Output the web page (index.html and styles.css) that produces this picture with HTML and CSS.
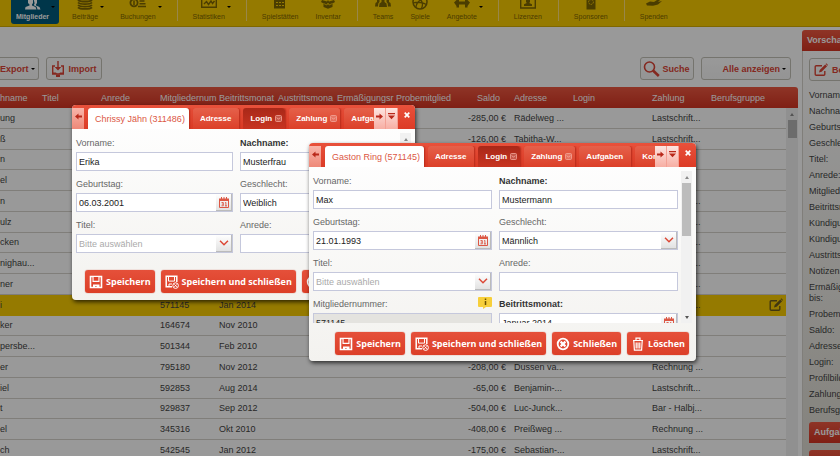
FILE: index.html
```html
<!DOCTYPE html>
<html lang="de">
<head>
<meta charset="utf-8">
<title>Mitglieder</title>
<link rel="stylesheet" href="styles.css">
</head>
<body>
<svg class="sprite" aria-hidden="true">
  <symbol id="i-save" viewBox="0 0 14 14"><path fill="none" stroke="currentColor" stroke-width="1.6" d="M1.5 1.5h11v11h-11z"/><path fill="currentColor" d="M3.5 1h7v6h-7zM4 9.5h6.5V13H7.6v-2H6.2v2H4z"/><path fill="#e0432e" d="M4.6 2h4.8v3.8H4.6z"/></symbol>
  <symbol id="i-saveclose" viewBox="0 0 14 14"><path fill="none" stroke="currentColor" stroke-width="1.5" d="M7 11.8H1.2V1.2h10.6V7"/><path fill="none" stroke="currentColor" d="M3.5 1.5v4.6h6V1.5M4 12V9h3"/><circle cx="10.6" cy="10.6" r="2.8" fill="#e0432e" stroke="currentColor"/><path stroke="currentColor" d="M9.4 9.4l2.4 2.4M11.8 9.4l-2.4 2.4"/></symbol>
  <symbol id="i-close" viewBox="0 0 14 14"><circle cx="7" cy="7" r="5.3" fill="none" stroke="currentColor" stroke-width="1.8"/><path stroke="currentColor" stroke-width="2.2" d="M4.6 4.6l4.8 4.8M9.4 4.6L4.6 9.4"/></symbol>
  <symbol id="i-trash" viewBox="0 0 14 14"><path fill="none" stroke="currentColor" stroke-width="1.2" d="M2 3.5h10M5 3V1.2h4V3M2.8 4l.6 9.2h7.2l.6-9.2M5.2 5.5v6M7 5.5v6M8.8 5.5v6"/></symbol>
  <symbol id="i-edit" viewBox="0 0 14 14"><path fill="none" stroke="currentColor" stroke-width="1.4" d="M8 2.7H2.2A1 1 0 0 0 1.2 3.7v7.600a1 1 0 0 0 1 1h7.600a1 1 0 0 0 1-1V8"/><path fill="currentColor" d="M5 9.500l.7-2.600L11.200 1.400l1.900 1.900-5.500 5.500zM11.700.9l.6-.6 1.700 1.700-.5.7z"/></symbol>
  <symbol id="i-cal" viewBox="0 0 10 11"><path fill="none" stroke="#dc5744" d="M.5 2.500h9v8h-9z"/><path fill="#dc5744" d="M0 1.500h10v2.500H0zM2 0h1v2H2zM4.500 0h1v2h-1zM7 0h1v2H7z"/><path fill="none" stroke="#dc5744" stroke-width=".9" d="M2.500 5.500h1.800v3.300H2.500M2.800 7.100h1.500M6 6l.9-.6v3.700M6 8.900h2"/></symbol>
  <symbol id="i-chev" viewBox="0 0 10 6"><path fill="none" stroke="#dc4a38" stroke-width="1.500" d="M1 .8l4 4 4-4"/></symbol>
  <symbol id="i-left" viewBox="0 0 7 7"><path fill="currentColor" d="M0 3.500L3.500.5v2H7v2H3.500v2z"/></symbol>
  <symbol id="i-right" viewBox="0 0 7 7"><path fill="currentColor" d="M7 3.500L3.500.5v2H0v2h3.500v2z"/></symbol>
  <symbol id="i-list" viewBox="0 0 7 7"><path fill="currentColor" d="M0 0h7v1.300H0zM0 2.500h7L3.500 6.300z"/></symbol>
  <symbol id="i-x" viewBox="0 0 6 6"><path stroke="currentColor" stroke-width="1.700" d="M.7.7l4.600 4.600M5.300.7L.7 5.300"/></symbol>
  <symbol id="i-box" viewBox="0 0 7 7"><rect x=".5" y=".5" width="6" height="6" rx="1" fill="#ffffff33" stroke="currentColor" stroke-width=".8"/><path fill="none" stroke="currentColor" stroke-width=".9" d="M1.800 2.500L3.500 4.300l1.700-1.800"/></symbol>
</svg>

<div class="app">
  <nav class="nav">
    <div class="group">
      <a href="#" class="item active drop"><svg class="ico" viewBox="0 0 18 10"><path fill="#fff" d="M4 0h5v3l-1 1.500v1l3.500 1.500 1 2.500H1L1.500 7 5.500 5.500v-1L4 3zM9.800 0H13v3l-1 1.500v1L15.500 7l1 2.500h-3l-.8-2.800L9.800 5.300l.8-2z"/></svg>Mitglieder</a>
      <a href="#" class="item drop"><svg class="ico" viewBox="0 0 18 10"><path fill="none" stroke="currentColor" stroke-width="1.800" d="M2 0c2 2 12 2 14 0M2 2.500c2 2.200 12 2.200 14 0M2 5c2 2.200 12 2.200 14 0M2 7.300c2 2.200 12 2.200 14 0"/></svg>Beiträge</a>
      <a href="#" class="item drop"><svg class="ico" viewBox="0 0 18 10"><circle cx="5" cy="2.800" r="3.600" fill="none" stroke="currentColor" stroke-width="1.800"/><path stroke="currentColor" stroke-width="1.500" d="M5 .5v4.500M10.500 1h5M10.500 3.700h6M9 6.500h8"/></svg>Buchungen</a>
    </div>
    <div class="group">
      <a href="#" class="item drop"><svg class="ico" viewBox="0 0 18 10"><path fill="none" stroke="currentColor" stroke-width="1.400" d="M1.700 0v7.300h14.600V0M4 4l2.500-2.500 2 3L11 1l1.500 2.500L14.500 1"/></svg>Statistiken</a>
    </div>
    <div class="group">
      <a href="#" class="item"><svg class="ico" viewBox="0 0 18 10"><path fill="currentColor" d="M3 0h11v8.500H3z"/><path stroke="#f9cb00" d="M5 2.500h2M8 2.500h2M11 2.500h2M5 5.500h2M8 5.500h2M11 5.500h2"/></svg>Spielstätten</a>
      <a href="#" class="item"><svg class="ico" viewBox="0 0 18 10"><path fill="currentColor" d="M3 0l5 1.500L9 0l1 1.500L15 0l1 2-2.500 1.500V7L9 8.700 4.500 7V3.500L2 2z"/><path stroke="#f9cb00" stroke-width=".8" fill="none" d="M4.500 3.500L8 5l1-2 1 2 3.500-1.500"/></svg>Inventar</a>
    </div>
    <div class="group">
      <a href="#" class="item"><svg class="ico" viewBox="0 0 18 10"><path fill="currentColor" d="M7.500 0h3v2l2 1.500.5 3.500H5l.5-3.500 2-1.500zM3 0h2.500v2L4.300 3.500 4 6.500H1l.5-3.500L3 2zM12.500 0H15v2l1.500 1L17 6.500h-3l-.3-3-1.200-1.500z"/></svg>Teams</a>
      <a href="#" class="item"><svg class="ico" viewBox="0 0 18 10"><circle cx="9" cy="2" r="7" fill="none" stroke="currentColor" stroke-width="1.500"/><path fill="none" stroke="currentColor" stroke-width="1.300" d="M2 3c5-1.500 9-1 13.500 1.500M5 8c0-4 2-7 6-9M10 9c2-3 2-6 0-9"/></svg>Spiele</a>
      <a href="#" class="item drop"><svg class="ico" viewBox="0 0 18 10"><path fill="currentColor" d="M1 2.500L3.500 0H6v1.500h6V0h2.500L17 2.500 14.500 6v1.500H12v-3H6v3H3.500V6z"/></svg>Angebote</a>
    </div>
    <div class="group">
      <a href="#" class="item"><svg class="ico" viewBox="0 0 18 10"><path fill="none" stroke="currentColor" stroke-width="1.400" d="M1.700 0v8h14.600V0"/><path fill="currentColor" d="M7 0h4v2l-.8 1 2.800 1.300V6H5V4.300L7.800 3 7 2z"/></svg>Lizenzen</a>
    </div>
    <div class="group">
      <a href="#" class="item"><svg class="ico" viewBox="0 0 18 10"><path fill="currentColor" d="M4.500 0h9v9.500h-9z"/><circle cx="9" cy="2" r="2.400" fill="none" stroke="#f9cb00" stroke-dasharray="1.500 .8"/></svg>Sponsoren</a>
    </div>
    <div class="group">
      <a href="#" class="item"><svg class="ico" viewBox="0 0 18 10"><path fill="currentColor" d="M1 3.500l4-2 4 .5L12 0h3l-2 2 4-1-4 3.500-5 1.300-6-.3z"/></svg>Spenden</a>
    </div>
  </nav>

  <div class="content">
    <main class="main">
      <div class="toolbar">
        <button class="btn cut">Export<i class="caret"></i></button>
        <button class="btn"><svg width="14" height="16" viewBox="0 0 14 16"><path fill="none" stroke="currentColor" stroke-width="1.400" d="M4 5H1.700v8h10.600V5H10"/><path fill="currentColor" d="M6.300 0h1.400v6h2.600L7 9.500 3.700 6h2.600zM5 13.500h4V16H5zM1 11.500h4L6 13H1zM13 11.500H9L8 13h5z"/></svg>Import</button>
        <span class="push"></span>
        <button class="btn search"><svg width="17" height="16" viewBox="0 0 17 16"><circle cx="6.500" cy="6" r="5" fill="none" stroke="currentColor" stroke-width="1.600"/><path stroke="currentColor" stroke-width="2.600" d="M10 9.500l5.800 5.500"/></svg>Suche</button>
        <button class="btn wide">Alle anzeigen<i class="caret"></i></button>
      </div>
      <div class="grid">
        <table class="members">
          <colgroup><col class="c-name"><col class="c-std"><col class="c-std"><col class="c-std"><col class="c-std"><col class="c-std"><col class="c-std"><col class="c-std"><col class="c-std"><col class="c-std"><col class="c-login"><col class="c-std"><col></colgroup>
          <thead><tr><th>hname</th><th>Titel</th><th>Anrede</th><th>Mitgliedernum</th><th>Beitrittsmonat</th><th>Austrittsmona</th><th>Ermäßigungsr</th><th>Probemitglied</th><th class="num">Saldo</th><th>Adresse</th><th>Login</th><th>Zahlung</th><th>Berufsgruppe</th></tr></thead>
          <tbody>
            <tr><td>ung</td><td></td><td></td><td></td><td></td><td></td><td></td><td></td><td class="num">-285,00 €</td><td>Rädelweg ...</td><td></td><td>Lastschrift...</td><td></td></tr>
            <tr><td>ß</td><td></td><td></td><td></td><td></td><td></td><td></td><td></td><td class="num">-126,00 €</td><td>Tabitha-W...</td><td></td><td>Lastschrift...</td><td></td></tr>
            <tr><td>n</td><td></td><td></td><td></td><td></td><td></td><td></td><td></td><td></td><td></td><td></td><td></td><td></td></tr>
            <tr><td>el</td><td></td><td></td><td></td><td></td><td></td><td></td><td></td><td></td><td></td><td></td><td></td><td></td></tr>
            <tr><td>n</td><td></td><td></td><td></td><td></td><td></td><td></td><td></td><td></td><td></td><td></td><td>Lastschrift...</td><td></td></tr>
            <tr><td>ulz</td><td></td><td></td><td></td><td></td><td></td><td></td><td></td><td></td><td></td><td></td><td>Lastschrift...</td><td></td></tr>
            <tr><td>cken</td><td></td><td></td><td></td><td></td><td></td><td></td><td></td><td></td><td></td><td></td><td>Lastschrift...</td><td></td></tr>
            <tr><td>nighau...</td><td></td><td></td><td></td><td></td><td></td><td></td><td></td><td></td><td></td><td></td><td>Lastschrift...</td><td></td></tr>
            <tr><td>ner</td><td></td><td></td><td></td><td></td><td></td><td></td><td></td><td></td><td></td><td></td><td>Lastschrift...</td><td></td></tr>
            <tr class="selected"><td>i</td><td></td><td></td><td>571145</td><td>Jan 2014</td><td></td><td></td><td></td><td></td><td></td><td></td><td>Lastschrift...</td><td class="action"><svg width="14" height="14"><use href="#i-edit"/></svg></td></tr>
            <tr><td>ker</td><td></td><td></td><td>164674</td><td>Nov 2010</td><td></td><td></td><td></td><td></td><td></td><td></td><td></td><td></td></tr>
            <tr><td>persbe...</td><td></td><td></td><td>501344</td><td>Feb 2010</td><td></td><td></td><td></td><td></td><td></td><td></td><td></td><td></td></tr>
            <tr><td>er</td><td></td><td></td><td>795180</td><td>Nov 2012</td><td></td><td></td><td></td><td class="num">-208,00 €</td><td>Dussen va...</td><td></td><td>Rechnung ...</td><td></td></tr>
            <tr><td>iel</td><td></td><td></td><td>592853</td><td>Aug 2014</td><td></td><td></td><td></td><td class="num">-65,00 €</td><td>Benjamin-...</td><td></td><td>Lastschrift...</td><td></td></tr>
            <tr><td>t</td><td></td><td></td><td>929837</td><td>Sep 2012</td><td></td><td></td><td></td><td class="num">-504,00 €</td><td>Luc-Junck...</td><td></td><td>Bar - Halbj...</td><td></td></tr>
            <tr><td>el</td><td></td><td></td><td>345316</td><td>Okt 2010</td><td></td><td></td><td></td><td class="num">-408,00 €</td><td>Preißweg ...</td><td></td><td>Rechnung ...</td><td></td></tr>
            <tr><td>ch</td><td></td><td></td><td>542545</td><td>Jan 2012</td><td></td><td></td><td></td><td class="num">-175,00 €</td><td>Sebastian-...</td><td></td><td>Lastschrift...</td><td></td></tr>
          </tbody>
        </table>
        <div class="scroll"><i class="up"></i><i class="thumb"></i></div>
      </div>
    </main>

    <aside class="side">
      <h2>Vorschau</h2>
      <div class="side-body">
        <button class="btn"><svg width="14" height="14"><use href="#i-edit"/></svg>Bearbeiten</button>
        <ul>
          <li>Vorname:</li><li>Nachname:</li><li>Geburtstag:</li><li>Geschlecht:</li><li>Titel:</li><li>Anrede:</li><li>Mitgliedernummer:</li><li>Beitrittsmonat:</li><li>Kündigung:</li><li>Kündigung:</li><li>Austrittsmonat:</li><li>Notizen:</li><li>Ermäßigung<br>bis:</li><li>Probemitglied:</li><li>Saldo:</li><li>Adresse:</li><li>Login:</li><li>Profilbild:</li><li>Zahlung:</li><li>Berufsgruppe:</li>
        </ul>
        <h3>Aufgaben</h3>
        <h3>Notizen</h3>
      </div>
    </aside>
  </div>
</div>

<div class="shade"></div>

<section class="win win-back" role="dialog" aria-label="Chrissy Jähn">
  <header class="bar">
    <button class="step" aria-label="Zurück"><svg width="7" height="7"><use href="#i-left"/></svg></button>
    <div class="tabs">
      <button class="tab on">Chrissy Jähn (311486)</button>
      <button class="tab">Adresse</button>
      <button class="tab dark more">Login<svg width="7" height="7"><use href="#i-box"/></svg></button>
      <button class="tab more">Zahlung<svg width="7" height="7"><use href="#i-box"/></svg></button>
      <button class="tab">Aufgaben</button>
    </div>
    <button class="step" aria-label="Weiter"><svg width="7" height="7"><use href="#i-right"/></svg></button>
    <button class="step" aria-label="Liste"><svg width="7" height="7"><use href="#i-list"/></svg></button>
    <button class="quit" aria-label="Schließen"><svg width="6" height="6"><use href="#i-x"/></svg></button>
  </header>
  <div class="pane">
    <form class="fields">
      <div class="field"><label for="a1">Vorname:</label><input id="a1" value="Erika"></div>
      <div class="field"><label class="req" for="a2">Nachname:</label><input id="a2" value="Musterfrau"></div>
      <div class="field"><label for="a3">Geburtstag:</label><div class="box"><input id="a3" value="06.03.2001"><span class="trig"><svg width="10" height="11"><use href="#i-cal"/></svg></span></div></div>
      <div class="field"><label for="a4">Geschlecht:</label><div class="box"><select id="a4"><option>Weiblich</option></select><span class="trig"><svg width="10" height="6"><use href="#i-chev"/></svg></span></div></div>
      <div class="field"><label for="a5">Titel:</label><div class="box"><select id="a5" class="empty"><option>Bitte auswählen</option></select><span class="trig"><svg width="10" height="6"><use href="#i-chev"/></svg></span></div></div>
      <div class="field"><label for="a6">Anrede:</label><input id="a6"></div>
    </form>
    <div class="scroll light"><i class="up"></i></div>
  </div>
  <footer class="actions start">
    <button class="act"><svg width="14" height="14"><use href="#i-save"/></svg>Speichern</button>
    <button class="act"><svg width="14" height="14"><use href="#i-saveclose"/></svg>Speichern und schließen</button>
    <button class="act"><svg width="14" height="14"><use href="#i-close"/></svg>Schließen</button>
  </footer>
</section>

<section class="win win-front" role="dialog" aria-label="Gaston Ring">
  <header class="bar">
    <button class="step" aria-label="Zurück"><svg width="7" height="7"><use href="#i-left"/></svg></button>
    <div class="tabs">
      <button class="tab on">Gaston Ring (571145)</button>
      <button class="tab">Adresse</button>
      <button class="tab dark more">Login<svg width="7" height="7"><use href="#i-box"/></svg></button>
      <button class="tab more">Zahlung<svg width="7" height="7"><use href="#i-box"/></svg></button>
      <button class="tab">Aufgaben</button>
      <button class="tab">Kontakte</button>
    </div>
    <button class="step" aria-label="Weiter"><svg width="7" height="7"><use href="#i-right"/></svg></button>
    <button class="step" aria-label="Liste"><svg width="7" height="7"><use href="#i-list"/></svg></button>
    <button class="quit" aria-label="Schließen"><svg width="6" height="6"><use href="#i-x"/></svg></button>
  </header>
  <div class="pane">
    <form class="fields">
      <div class="field"><label for="b1">Vorname:</label><input id="b1" value="Max"></div>
      <div class="field"><label class="req" for="b2">Nachname:</label><input id="b2" value="Mustermann"></div>
      <div class="field"><label for="b3">Geburtstag:</label><div class="box"><input id="b3" value="21.01.1993"><span class="trig"><svg width="10" height="11"><use href="#i-cal"/></svg></span></div></div>
      <div class="field"><label for="b4">Geschlecht:</label><div class="box"><select id="b4"><option>Männlich</option></select><span class="trig"><svg width="10" height="6"><use href="#i-chev"/></svg></span></div></div>
      <div class="field"><label for="b5">Titel:</label><div class="box"><select id="b5" class="empty"><option>Bitte auswählen</option></select><span class="trig"><svg width="10" height="6"><use href="#i-chev"/></svg></span></div></div>
      <div class="field"><label for="b6">Anrede:</label><input id="b6"></div>
      <div class="field"><label for="b7">Mitgliedernummer:<svg class="hint" width="14" height="12" viewBox="0 0 14 12"><path fill="#f7cf3a" d="M1 0h12a1 1 0 0 1 1 1v8a1 1 0 0 1-1 1H8l-3 2v-2H1a1 1 0 0 1-1-1V1a1 1 0 0 1 1-1z"/><path stroke="#6b5200" stroke-width="1.500" d="M7.500 1.500V3M7.500 4v4"/></svg></label><input id="b7" class="locked" value="571145" readonly></div>
      <div class="field"><label class="req" for="b8">Beitrittsmonat:</label><div class="box"><input id="b8" value="Januar 2014"><span class="trig"><svg width="10" height="11"><use href="#i-cal"/></svg></span></div></div>
    </form>
    <div class="scroll light"><i class="up"></i><i class="thumb"></i><i class="down"></i></div>
  </div>
  <footer class="actions">
    <button class="act"><svg width="14" height="14"><use href="#i-save"/></svg>Speichern</button>
    <button class="act"><svg width="14" height="14"><use href="#i-saveclose"/></svg>Speichern und schließen</button>
    <button class="act"><svg width="14" height="14"><use href="#i-close"/></svg>Schließen</button>
    <button class="act"><svg width="14" height="14"><use href="#i-trash"/></svg>Löschen</button>
  </footer>
</section>
</body>
</html>
```
FILE: styles.css
```css
* { box-sizing: border-box; }
body {
  margin: 0;
  height: 100vh;
  overflow: hidden;
  position: relative;
  background: #fff;
  color: #444;
  font: 9px/12px "Liberation Sans", Arial, sans-serif;
}
button, input, select { font: inherit; margin: 0; }
button { border: 0; padding: 0; background: none; white-space: nowrap; }
.sprite { display: none; }
svg { flex: none; }

/* navigation */
.nav {
  display: flex;
  height: 27px;
  overflow: hidden;
  padding-left: 4px;
  background: #f9cb00;
  border-bottom: 1px solid #d4ac00;
}
.group { display: flex; padding: 0 7px; }
.group + .group { border-left: 1px solid #ffe27a; height: 21px; }
.item {
  position: relative;
  display: flex;
  flex-direction: column;
  align-items: center;
  height: 24px;
  padding: 0 9px 0 8px;
  color: #7d6600;
  font-size: 7px;
  line-height: 13px;
  text-decoration: none;
}
.ico { width: 18px; height: 10px; }
.drop { padding-right: 14px; }
.drop::after {
  content: "";
  position: absolute;
  right: 8px;
  top: 6px;
  border: 2px solid transparent;
  border-top-color: #000;
  border-bottom: 0;
}
.item.active {
  margin-right: 5px;
  padding: 0 10px 0 5px;
  color: #fff;
  font-weight: bold;
  background: #005a7c;
  border-radius: 0 0 3px 3px;
}
.item.active::after { right: 4px; }

/* page frame */
.content { display: grid; grid-template-columns: minmax(0, 1fr) 38px; gap: 4px; }
.main { padding-top: 30px; }
.toolbar { display: flex; gap: 7px; padding-right: 7px; margin-bottom: 7px; }
.push { flex: 1; }
.btn {
  display: flex;
  align-items: center;
  gap: 4px;
  height: 23px;
  padding: 0 4px;
  color: #dc4436;
  font-weight: bold;
  border: 1px solid #c4c1b8;
  border-radius: 3px;
  background: linear-gradient(#fff, #f7f7f7);
}
.btn.cut { gap: 2px; padding: 0 3px 0 0; border-left: 0; border-radius: 0 3px 3px 0; }
.btn.search { padding: 0 4px 0 2px; gap: 2px; }
.btn.wide { padding-left: 20px; gap: 2px; }
.caret { border: 2px solid transparent; border-top-color: #000; border-bottom: 0; }

/* member table */
.grid { position: relative; }
.members {
  width: 100%;
  height: 374px;
  table-layout: fixed;
  border-spacing: 0;
}
.c-name { width: 38px; }
.c-std { width: 59px; }
.c-login { width: 79px; }
th, td {
  padding: 0 0 0 4px;
  text-align: left;
  white-space: nowrap;
}
th:first-child, td:first-child { padding-left: 0; }
th {
  height: 21px;
  color: #fff;
  font-weight: normal;
  background: linear-gradient(#ee5841, #d43523);
}
th:last-child { border-radius: 0 3px 0 0; }
td { height: 20px; border-bottom: 1px solid #d5d3cb; }
.num { text-align: right; padding-right: 4px; }
th.num { padding-right: 10px; }
.selected td { background: #f9cb00; border-color: #f9cb00; }
.action { text-align: right; padding-right: 15px; }
.action svg { display: block; margin-left: auto; color: #6d5c1c; }

.scroll {
  position: absolute;
  top: 21px;
  right: 0;
  bottom: 0;
  width: 12px;
  display: flex;
  flex-direction: column;
  align-items: center;
  background: #f0f0f0;
}
.up { margin: 5px 0 4px; border: 2px solid transparent; border-bottom: 3px solid #8a8a8a; border-top: 0; }
.down { margin: auto 0 4px; border: 2px solid transparent; border-top: 3px solid #555; border-bottom: 0; }
.thumb { width: 9px; height: 18px; background: #b4b4b4; }

/* preview column */
.side { overflow: hidden; padding-top: 3px; white-space: nowrap; }
h2, h3 {
  margin: 0;
  height: 21px;
  padding-left: 5px;
  color: #fff;
  font-size: 9px;
  line-height: 20px;
  background: linear-gradient(#ee5841, #d43523);
  border-radius: 3px 0 0 0;
}
.side-body {
  padding: 7px 0 0 6px;
  border-left: 1px solid #d5d3cb;
  background: linear-gradient(#fff, #dcd9d0);
}
.side ul { margin: 6px 0 4px; padding: 0; list-style: none; }
.side li { padding: 3px 0 2px; line-height: 11px; }
h3 { margin-bottom: 7px; }

.shade { position: absolute; inset: 0; background: rgba(0, 0, 0, .4); }

/* floating windows */
.win {
  position: absolute;
  display: flex;
  flex-direction: column;
  overflow: hidden;
  border-radius: 4px;
  background: linear-gradient(#fff, #f3f2ef);
  box-shadow: 1px 2px 4px rgba(0, 0, 0, .7);
}
.win-back { left: 72px; top: 105px; width: 343px; }
.win-front { left: 309px; top: 143px; width: 387px; }
.bar {
  display: flex;
  padding-top: 3px;
  height: 24px;
  background: linear-gradient(#e8513b, #dc3b26);
}
.tabs { display: flex; flex: 1; gap: 4px; min-width: 0; overflow: hidden; padding-left: 4px; }
.tab {
  display: flex;
  flex: none;
  align-items: center;
  gap: 3px;
  padding: 0 8px 0 7px;
  color: #fff;
  font-size: 8px;
  font-weight: bold;
  border-radius: 3px 3px 0 0;
  background: linear-gradient(#e5604a, #dc4029);
  box-shadow: 1px 0 2px #b52a1a;
}
.tab svg { color: #f3a79b; }
.tab.more { padding-right: 3px; }
.tab.on { padding-right: 4px; color: #dc5744; font-size: 9px; font-weight: normal; background: #fff; }
.tab.dark { background: linear-gradient(#a92818, #c83421); }
.step {
  width: 12px;
  padding-bottom: 4px;
  color: #b9281a;
  background: linear-gradient(#f9b5aa, #ee8878);
}
.tabs ~ .step { background: linear-gradient(#fde4e0, #f7aea3); border-right: 1px solid #f3a094; }
.quit { width: 17px; padding-bottom: 8px; color: #fff; }

.pane { position: relative; overflow: hidden; }
.win-front .pane { max-height: 156px; }
.win-back .pane { height: 135px; }
.fields {
  display: grid;
  grid-template-columns: 1fr 1fr;
  gap: 6px 7px;
  padding: 7px 18px 0 4px;
}
.field { display: flex; flex-direction: column; gap: 1px; min-width: 0; }
label { display: flex; justify-content: space-between; height: 15px; line-height: 15px; color: #666; }
.req { color: #333; font-weight: bold; }
.box { position: relative; display: flex; }
input, select {
  width: 100%;
  height: 19px;
  padding: 0 2px;
  color: #222;
  border: 1px solid #c5c8dc;
  border-radius: 0;
  background: #fff;
  appearance: none;
}
.empty { color: #aaa; }
.locked { background: #e4e3df; }
.trig {
  position: absolute;
  top: 1px;
  right: 1px;
  width: 16px;
  height: 17px;
  display: grid;
  place-items: center;
  pointer-events: none;
  background: linear-gradient(#fff, #e2e2e2);
  border-right: 1px solid #bbb;
  border-bottom: 1px solid #bbb;
}
.light { top: 4px; right: 4px; width: 11px; background: #f1f1f1; }
.light .thumb { height: 53px; background: #bcbcbc; }

.actions { display: flex; justify-content: flex-end; gap: 6px; padding: 9px 7px 6px; }
.actions.start { justify-content: flex-start; padding: 6px 13px 7px; }
.act {
  display: flex;
  align-items: center;
  gap: 3px;
  height: 23px;
  padding: 0 4px;
  color: #fff;
  font-family: "Open Sans", "Noto Sans", sans-serif;
  font-weight: bold;
  border-radius: 3px;
  background: linear-gradient(#e5503a, #dc3f28);
  box-shadow: 0 0 1px #b52a1a;
}
```
